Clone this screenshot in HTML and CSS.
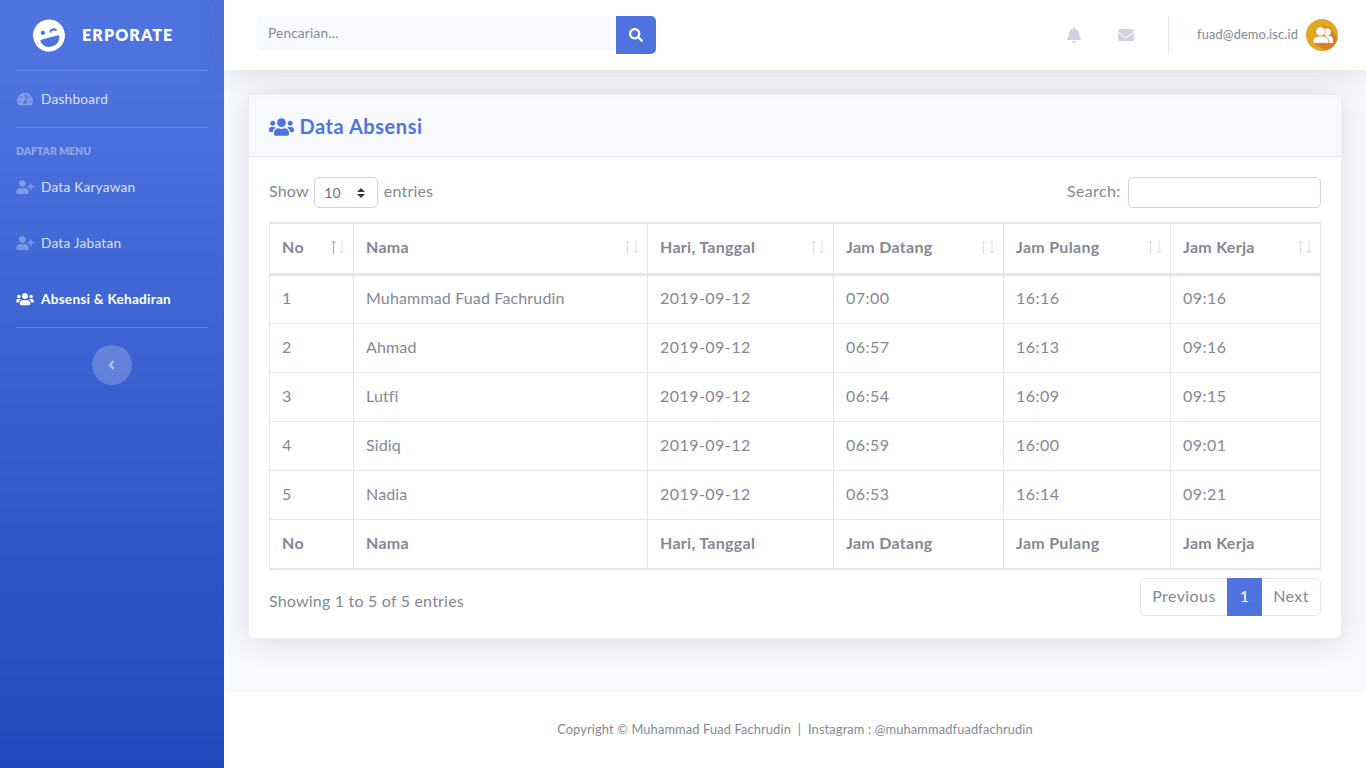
FILE: index.html
```html
<!DOCTYPE html>
<html>
<head>
	<meta charset="utf-8">
	<title>Data Absensi</title>
	<link rel="stylesheet" href="styles.css">
</head>
<body>
	<svg class="defs">
		<symbol id="ic-users" viewBox="0 0 640 512"><path d="M96 224c35.3 0 64-28.7 64-64s-28.7-64-64-64-64 28.7-64 64 28.7 64 64 64zm448 0c35.3 0 64-28.7 64-64s-28.7-64-64-64-64 28.7-64 64 28.7 64 64 64zm32 32h-64c-17.6 0-33.5 7.1-45.1 18.6 40.3 22.1 68.9 62 75.1 109.4h66c17.7 0 32-14.3 32-32v-32c0-35.3-28.7-64-64-64zm-256 0c61.9 0 112-50.1 112-112S381.9 32 320 32 208 82.1 208 144s50.1 112 112 112zm76.8 32h-8.3c-20.8 10-43.9 16-68.5 16s-47.6-6-68.5-16h-8.3C179.6 288 128 339.6 128 403.2V432c0 26.5 21.5 48 48 48h288c26.5 0 48-21.5 48-48v-28.8c0-63.6-51.6-115.2-115.2-115.2zm-223.7-13.4C161.5 263.1 145.6 256 128 256H64c-35.3 0-64 28.7-64 64v32c0 17.7 14.3 32 32 32h65.9c6.3-47.4 34.9-87.3 75.2-109.4z"/></symbol>
		<symbol id="ic-user-plus" viewBox="0 0 640 512"><path d="M624 208h-64v-64c0-8.8-7.2-16-16-16h-32c-8.8 0-16 7.2-16 16v64h-64c-8.8 0-16 7.2-16 16v32c0 8.8 7.2 16 16 16h64v64c0 8.8 7.2 16 16 16h32c8.8 0 16-7.2 16-16v-64h64c8.8 0 16-7.2 16-16v-32c0-8.8-7.2-16-16-16zm-400 48c70.7 0 128-57.3 128-128S294.7 0 224 0 96 57.3 96 128s57.3 128 128 128zm89.6 32h-16.7c-22.2 10.2-46.9 16-72.9 16s-50.6-5.8-72.9-16h-16.7C60.2 288 0 348.2 0 422.4V464c0 26.5 21.5 48 48 48h352c26.5 0 48-21.5 48-48v-41.6c0-74.2-60.2-134.4-134.4-134.4z"/></symbol>
		<symbol id="ic-sort" viewBox="0 0 16 14"><path class="up" d="M2.500 14V1M0 3.500l2.500-2.500L5 3.500"/><path class="down" d="M11 0v13M8.500 10.500L11 13l2.500-2.500"/></symbol>
	</svg>

	<div class="wrapper">
		<aside class="sidebar">
			<a class="brand">
				<svg class="brand_icon" viewBox="0 0 496 512"><path d="M248 8C111 8 0 119 0 256s111 248 248 248 248-111 248-248S385 8 248 8zm20.1 198.1c4-25.2 34.2-42.1 59.9-42.1s55.9 16.9 59.9 42.1c1.7 11.1-11.4 18.3-19.8 10.8l-9.5-8.5c-14.8-13.2-46.2-13.2-61 0L288 217c-8.4 7.4-21.6.3-19.9-10.9zM168 160c17.7 0 32 14.3 32 32s-14.3 32-32 32-32-14.3-32-32 14.3-32 32-32zm230.9 146C390 377 329.4 432 256 432h-16c-73.4 0-134-55-142.9-126-1.2-9.5 6.3-18 15.9-18h270c9.6 0 17.1 8.4 15.9 18z"/></svg>
				<span class="brand_text">ERPORATE</span>
			</a>
			<hr class="side_divider">
			<a class="nav_item">
				<svg class="nav_icon" viewBox="0 0 576 512"><path d="M288 32C128.94 32 0 160.94 0 320c0 52.8 14.25 102.26 39.06 144.8 5.61 9.62 16.3 15.2 27.44 15.2h443c11.14 0 21.83-5.58 27.44-15.2C561.75 422.26 576 372.8 576 320c0-159.06-128.94-288-288-288zm0 64c14.71 0 26.58 10.13 30.32 23.65-1.11 2.26-2.64 4.23-3.45 6.67l-9.22 27.67c-5.13 3.49-10.97 6.01-17.64 6.01-17.67 0-32-14.33-32-32S270.33 96 288 96zM96 384c-17.67 0-32-14.33-32-32s14.33-32 32-32 32 14.33 32 32-14.33 32-32 32zm48-160c-17.67 0-32-14.33-32-32s14.33-32 32-32 32 14.33 32 32-14.33 32-32 32zm246.77-72.41l-61.33 184C343.13 347.33 352 364.54 352 384c0 11.72-3.38 22.55-8.88 32H232.88c-5.5-9.45-8.88-20.28-8.88-32 0-33.94 26.5-61.43 59.9-63.59l61.34-184.01c4.17-12.56 17.73-19.45 30.36-15.17 12.57 4.19 19.35 17.77 15.17 30.36zm14.66 57.2l15.52-46.55c3.47-1.29 7.13-2.23 11.05-2.23 17.67 0 32 14.33 32 32s-14.33 32-32 32c-11.38-.01-20.89-6.28-26.57-15.22zM480 384c-17.67 0-32-14.33-32-32s14.33-32 32-32 32 14.33 32 32-14.33 32-32 32z"/></svg>
				<span>Dashboard</span>
			</a>
			<hr class="side_divider">
			<div class="side_heading">DAFTAR MENU</div>
			<a class="nav_item">
				<svg class="nav_icon"><use href="#ic-user-plus"/></svg>
				<span>Data Karyawan</span>
			</a>
			<a class="nav_item">
				<svg class="nav_icon"><use href="#ic-user-plus"/></svg>
				<span>Data Jabatan</span>
			</a>
			<a class="nav_item active">
				<svg class="nav_icon"><use href="#ic-users"/></svg>
				<span>Absensi &amp; Kehadiran</span>
			</a>
			<hr class="side_divider">
			<button class="side_toggle">
				<svg viewBox="0 0 256 512"><path d="M31.7 239l136-136c9.4-9.4 24.6-9.4 33.9 0l22.6 22.6c9.4 9.4 9.4 24.6 0 33.9L127.9 256l96.4 96.4c9.4 9.4 9.4 24.6 0 33.9L201.7 409c-9.4 9.4-24.6 9.4-33.9 0l-136-136c-9.5-9.4-9.5-24.6-.1-34z"/></svg>
			</button>
		</aside>

		<div class="content">
			<header class="topbar">
				<form class="top_search">
					<input type="text" placeholder="Pencarian...">
					<button type="button">
						<svg viewBox="0 0 512 512"><path d="M505 442.7L405.3 343c-4.5-4.5-10.6-7-17-7H372c27.6-35.3 44-79.7 44-128C416 93.1 322.9 0 208 0S0 93.1 0 208s93.1 208 208 208c48.3 0 92.7-16.4 128-44v16.3c0 6.4 2.5 12.5 7 17l99.7 99.7c9.4 9.4 24.6 9.4 33.9 0l28.3-28.3c9.4-9.4 9.4-24.6.1-34zM208 336c-70.7 0-128-57.2-128-128 0-70.7 57.2-128 128-128 70.7 0 128 57.2 128 128 0 70.7-57.2 128-128 128z"/></svg>
					</button>
				</form>
				<div class="top_right">
					<a class="top_icon">
						<svg class="bell" viewBox="0 0 448 512"><path d="M224 512c35.32 0 63.97-28.65 63.97-64H160.03c0 35.35 28.65 64 63.97 64zm215.39-149.71c-19.32-20.76-55.47-51.99-55.47-154.29 0-77.7-54.48-139.9-127.94-155.16V32c0-17.67-14.32-32-31.98-32s-31.98 14.33-31.98 32v20.84C118.56 68.1 64.08 130.3 64.08 208c0 102.3-36.15 133.53-55.47 154.29-6 6.45-8.66 14.16-8.61 21.71.11 16.4 12.98 32 32.1 32h383.8c19.12 0 32-15.6 32.1-32 .05-7.55-2.61-15.27-8.61-21.71z"/></svg>
					</a>
					<a class="top_icon">
						<svg class="mail" viewBox="0 0 512 512"><path d="M502.3 190.8c3.9-3.1 9.7-.2 9.7 4.7V400c0 26.5-21.5 48-48 48H48c-26.5 0-48-21.5-48-48V195.6c0-5 5.7-7.8 9.7-4.7 22.4 17.4 52.1 39.5 154.1 113.6 21.1 15.4 56.7 47.8 92.2 47.6 35.7.3 72-32.8 92.3-47.6 102-74.1 131.6-96.3 154-113.7zM256 320c23.2.4 56.6-29.2 73.4-41.4 132.7-96.3 142.8-104.7 173.4-128.7 5.8-4.5 9.2-11.5 9.2-18.9v-19c0-26.5-21.5-48-48-48H48C21.5 64 0 85.5 0 112v19c0 7.4 3.4 14.3 9.2 18.9 30.6 23.9 40.7 32.4 173.4 128.7 16.8 12.2 50.2 41.8 73.4 41.4z"/></svg>
					</a>
					<div class="top_divider"></div>
					<span class="top_user">fuad@demo.isc.id</span>
					<svg class="avatar" viewBox="0 0 32 32">
						<circle cx="16" cy="16" r="16" fill="#e0a81e"/>
						<path d="M7 24 L17 7 L24 8 L31.500 20 A16 16 0 0 1 20 31.500 Z" fill="#d6802a"/>
						<circle cx="21" cy="13" r="3.800" fill="#fff"/>
						<path d="M17 24v-4c0-2.500 2-3.500 4-3.500 3.500 0 6 1.500 6 4V24z" fill="#fff"/>
						<circle cx="14.500" cy="12.500" r="4.800" fill="#fff" stroke="#d6802a" stroke-width=".7"/>
						<path d="M7 24.300v-2.800c0-3 3.500-4.500 7.500-4.500s8 1.500 8 4.500v2.800z" fill="#fff" stroke="#d6802a" stroke-width=".7"/>
					</svg>
				</div>
			</header>

			<main class="main">
				<section class="card">
					<div class="card_header">
						<h1><svg class="title_icon"><use href="#ic-users"/></svg> Data Absensi</h1>
					</div>
					<div class="card_body">
						<div class="dt_top">
							<label class="dt_length">Show
								<select><option>10</option></select>
								entries</label>
							<label class="dt_filter">Search: <input type="search"></label>
						</div>
						<table class="dt_table">
							<colgroup>
								<col class="c_no"><col class="c_nama"><col class="c_hari"><col class="c_datang"><col class="c_pulang"><col class="c_kerja">
							</colgroup>
							<thead>
								<tr>
									<th class="sorted"><div class="th_wrap">No<svg class="sort"><use href="#ic-sort"/></svg></div></th>
									<th><div class="th_wrap">Nama<svg class="sort"><use href="#ic-sort"/></svg></div></th>
									<th><div class="th_wrap">Hari, Tanggal<svg class="sort"><use href="#ic-sort"/></svg></div></th>
									<th><div class="th_wrap">Jam Datang<svg class="sort"><use href="#ic-sort"/></svg></div></th>
									<th><div class="th_wrap">Jam Pulang<svg class="sort"><use href="#ic-sort"/></svg></div></th>
									<th><div class="th_wrap">Jam Kerja<svg class="sort"><use href="#ic-sort"/></svg></div></th>
								</tr>
							</thead>
							<tbody>
								<tr><td>1</td><td>Muhammad Fuad Fachrudin</td><td>2019-09-12</td><td>07:00</td><td>16:16</td><td>09:16</td></tr>
								<tr><td>2</td><td>Ahmad</td><td>2019-09-12</td><td>06:57</td><td>16:13</td><td>09:16</td></tr>
								<tr><td>3</td><td>Lutfi</td><td>2019-09-12</td><td>06:54</td><td>16:09</td><td>09:15</td></tr>
								<tr><td>4</td><td>Sidiq</td><td>2019-09-12</td><td>06:59</td><td>16:00</td><td>09:01</td></tr>
								<tr><td>5</td><td>Nadia</td><td>2019-09-12</td><td>06:53</td><td>16:14</td><td>09:21</td></tr>
							</tbody>
							<tfoot>
								<tr><th>No</th><th>Nama</th><th>Hari, Tanggal</th><th>Jam Datang</th><th>Jam Pulang</th><th>Jam Kerja</th></tr>
							</tfoot>
						</table>
						<div class="dt_bottom">
							<div class="dt_info">Showing 1 to 5 of 5 entries</div>
							<ul class="pager">
								<li class="prev">Previous</li>
								<li class="current">1</li>
								<li class="next">Next</li>
							</ul>
						</div>
					</div>
				</section>
			</main>

			<footer class="footer">Copyright © Muhammad Fuad Fachrudin &nbsp;|&nbsp; Instagram : @muhammadfuadfachrudin</footer>
		</div>
	</div>
</body>
</html>
```

FILE: styles.css
```css
* {
	box-sizing: border-box;
}
body {
	margin: 0;
	background: #f8f9fc;
	color: #858796;
	font-family: "Lato", "Noto Sans", sans-serif;
	font-size: 16px;
	letter-spacing: .2px;
	line-height: 1.5;
}
.defs {
	display: none;
}
.wrapper {
	display: flex;
	height: 768px;
	overflow: hidden;
}

/* sidebar */
.sidebar {
	display: flex;
	flex-direction: column;
	width: 224px;
	flex: none;
	background: linear-gradient(180deg, #4e73df 10%, #224abe 100%);
}
.brand {
	display: flex;
	align-items: center;
	gap: 17px;
	height: 70px;
	padding-left: 33px;
	color: #fff;
}
.brand_icon {
	width: 32px;
	height: 33px;
	fill: #fff;
	transform: rotate(-15deg);
}
.brand_text {
	font-size: 16px;
	font-weight: 800;
	letter-spacing: 1.1px;
}
.side_divider {
	width: 192px;
	height: 1px;
	margin: 0 16px;
	border: 0;
	background: rgba(255, 255, 255, .15);
	flex: none;
}
.nav_item {
	display: flex;
	align-items: center;
	gap: 7px;
	height: 56px;
	padding-left: 16px;
	color: rgba(255, 255, 255, .8);
	font-size: 13.6px;
	letter-spacing: .25px;
}
.nav_item.active {
	color: #fff;
	font-weight: 700;
}
.nav_icon {
	width: 18px;
	height: 14px;
	fill: rgba(255, 255, 255, .3);
}
.nav_item.active .nav_icon {
	fill: #fff;
}
.side_heading {
	height: 31px;
	padding: 16px 16px 0;
	color: rgba(255, 255, 255, .4);
	font-size: 10.4px;
	font-weight: 800;
	letter-spacing: 0;
	line-height: 15px;
}
.side_toggle {
	display: flex;
	align-items: center;
	justify-content: center;
	width: 40px;
	height: 40px;
	margin: 17px auto 0;
	padding: 0 2px 0 0;
	border: 0;
	border-radius: 50%;
	background: rgba(255, 255, 255, .2);
}
.side_toggle svg {
	width: 7px;
	height: 14px;
	fill: rgba(255, 255, 255, .5);
}

/* topbar */
.content {
	display: flex;
	flex-direction: column;
	flex: 1;
	min-width: 0;
}
.topbar {
	display: flex;
	align-items: center;
	justify-content: space-between;
	height: 70px;
	flex: none;
	padding: 0 28px 0 32px;
	background: #fff;
	box-shadow: 0 .15rem 1.75rem 0 rgba(58, 59, 69, .15);
	position: relative;
}
.top_search {
	display: flex;
	align-items: flex-start;
	width: 400px;
	height: 38px;
}
.top_search input {
	width: 360px;
	height: 34px;
	padding: 0 12px;
	border: 0;
	border-radius: 5px 0 0 5px;
	background: #f8f9fc;
	font: inherit;
	font-size: 13.6px;
	letter-spacing: .2px;
}
.top_search input::placeholder {
	color: #858796;
}
.top_search button {
	display: flex;
	align-items: center;
	justify-content: center;
	width: 40px;
	height: 38px;
	padding: 0;
	border: 0;
	border-radius: 0 5px 5px 0;
	background: #4e73df;
}
.top_search svg {
	width: 14px;
	height: 14px;
	fill: #fff;
}
.top_right {
	display: flex;
	align-items: center;
}
.top_icon {
	display: flex;
	justify-content: center;
	width: 52px;
}
.bell {
	width: 14px;
	height: 16px;
	fill: #d1d3e2;
}
.mail {
	width: 16px;
	height: 16px;
	fill: #d1d3e2;
}
.top_divider {
	width: 1px;
	height: 38px;
	margin: 0 28px 0 16px;
	background: #e3e6f0;
}
.top_user {
	margin-right: 8px;
	font-size: 12.8px;
	letter-spacing: .15px;
}
.avatar {
	width: 32px;
	height: 32px;
}

/* page */
.main {
	flex: 1;
	padding: 24px 24px 0;
}
.card {
	height: 545px;
	background: #fff;
	border: 1px solid #eceef4;
	border-radius: 6px;
	box-shadow: 0 .15rem 1.75rem 0 rgba(58, 59, 69, .15);
}
.card_header {
	height: 62px;
	padding: 1px 20px 0;
	background: #f8f9fc;
	border-bottom: 1px solid #e3e6f0;
	border-radius: 5px 5px 0 0;
}
.card_header h1 {
	margin: 0;
	color: #4e73df;
	font-size: 20px;
	font-weight: 700;
	letter-spacing: .55px;
	line-height: 60px;
}
.title_icon {
	width: 25px;
	height: 20px;
	fill: #4e73df;
	vertical-align: -3px;
}
.card_body {
	padding: 20px;
}
.dt_top {
	display: flex;
	justify-content: space-between;
	height: 45px;
}
.dt_length {
	display: flex;
	align-items: flex-start;
	gap: 5.500px;
	line-height: 28px;
}
.dt_length select {
	width: 64px;
	height: 31px;
	margin: 0;
	padding: 0 0 0 9px;
	border: 1px solid #d1d3e2;
	border-radius: 5px;
	appearance: none;
	background: #fff url("data:image/svg+xml,%3csvg xmlns='http://www.w3.org/2000/svg' viewBox='0 0 4 5'%3e%3cpath fill='%23343a40' d='M2 0L0 2h4zm0 5L0 3h4z'/%3e%3c/svg%3e") no-repeat right 12px center / 8px 10px;
	color: #6e707e;
	font: inherit;
	font-size: 14px;
}
.dt_filter {
	letter-spacing: .35px;
}
.dt_filter input {
	width: 193px;
	height: 31px;
	margin-left: 3px;
	border: 1px solid #d1d3e2;
	border-radius: 5px;
	vertical-align: middle;
}

/* table */
.dt_table {
	width: 1051px;
	table-layout: fixed;
	border-collapse: collapse;
}
.c_no { width: 84px; }
.c_nama { width: 294px; }
.c_hari { width: 186px; }
.c_datang { width: 170px; }
.c_pulang { width: 167px; }
.c_kerja { width: 150px; }
.dt_table th,
.dt_table td {
	height: 49px;
	padding: 0 12px 2px;
	border: 1px solid #e3e6f0;
	text-align: left;
	vertical-align: middle;
	letter-spacing: .45px;
}
.dt_table th {
	font-weight: 700;
	letter-spacing: .3px;
}
.dt_table td:nth-child(2) {
	letter-spacing: .15px;
}
.dt_table thead th {
	height: 51px;
	padding-bottom: 3px;
	border-top-width: 2px;
	border-bottom-width: 3px;
}
.dt_table tfoot th {
	height: 50px;
	border-bottom-width: 2px;
}
.th_wrap {
	display: flex;
	align-items: center;
	justify-content: space-between;
}
.sort {
	--up: #dadde6;
	width: 16px;
	height: 14px;
	margin-right: -6px;
	fill: none;
	stroke-width: 1;
}
.sorted .sort {
	--up: #a9a498;
}
#ic-sort .up {
	stroke: var(--up);
}
#ic-sort .down {
	stroke: #dadde6;
}
.dt_bottom {
	display: flex;
	justify-content: space-between;
	margin-top: 8px;
}
.dt_info {
	padding-top: 11px;
}
.pager {
	display: flex;
	height: 38px;
	margin: 0;
	padding: 0;
	list-style: none;
	border: 1px solid #e3e6f0;
	border-radius: 5px;
	letter-spacing: .4px;
}
.pager li {
	text-align: center;
	line-height: 34px;
}
.pager .prev {
	width: 86px;
}
.pager .next {
	width: 58px;
}
.pager .current {
	width: 35px;
	margin: -1px 0;
	background: #4e73df;
	color: #fff;
	line-height: 36px;
}

/* footer */
.footer {
	height: 76px;
	flex: none;
	background: #fff;
	font-size: 12.8px;
	letter-spacing: .15px;
	line-height: 75px;
	text-align: center;
}
```
